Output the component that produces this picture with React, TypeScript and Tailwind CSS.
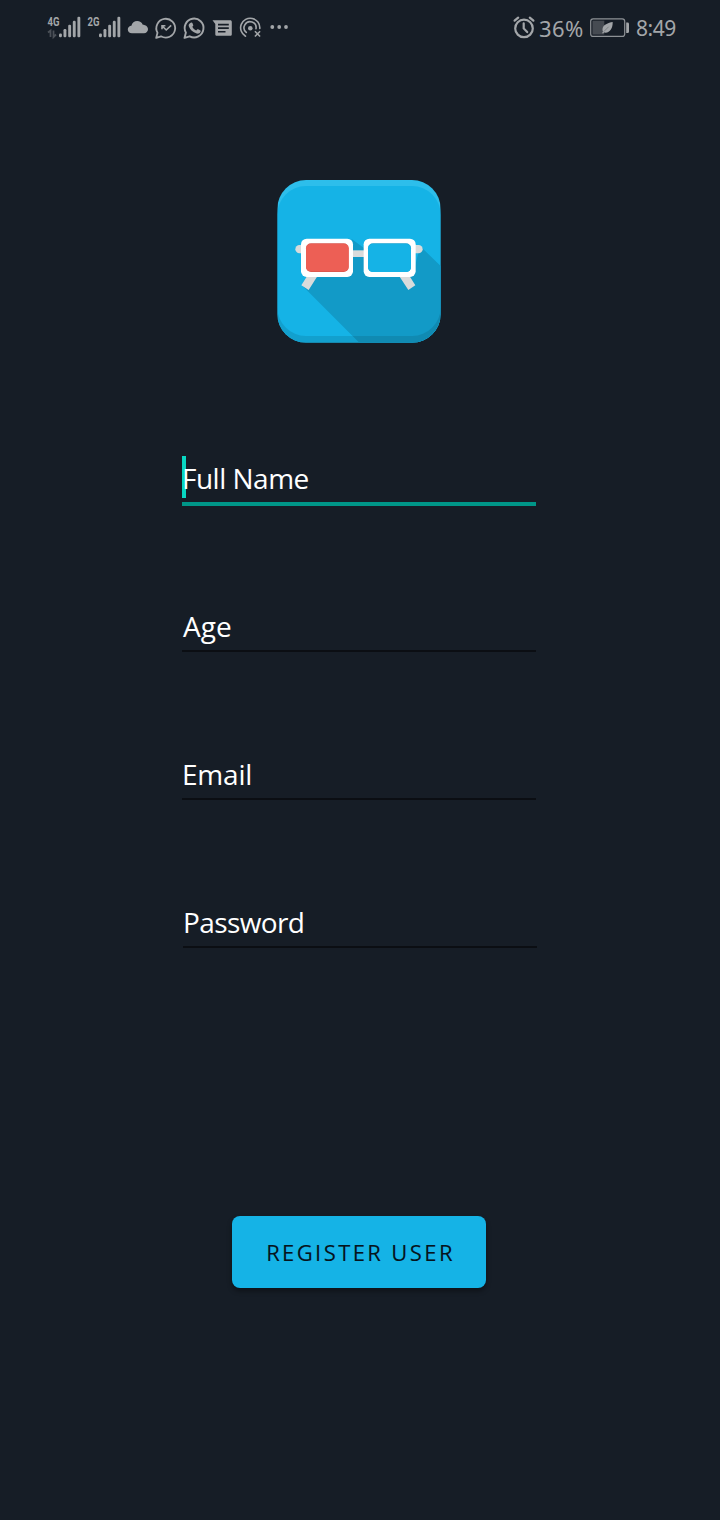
import type { ReactNode } from "react";

function Glyph({ x, width, className, children }: { x: number; width: number; className?: string; children: ReactNode }) {
  return (
    <svg
      width={width}
      height={40}
      viewBox={`${x} 8 ${width} 40`}
      className={`shrink-0 overflow-visible ${className ?? ""}`}
      fill="#a3a6a9"
    >
      {children}
    </svg>
  );
}

function Signal({ label, active }: { label: string; active?: boolean }) {
  return (
    <Glyph x={46} width={40}>
      <text x="47.5" y="26" fontSize="12" fontWeight="700" textLength="12" lengthAdjust="spacingAndGlyphs" fontFamily="Roboto, sans-serif">
        {label}
      </text>
      {active && (
        <path d="M48 32.500l2.500-2v6.500M53.500 30.500v6.500l2.500-2.500" fill="none" stroke="#4b5057" strokeWidth="1.8" />
      )}
      <rect x="59" y="33.5" width="2.9" height="3.7" rx="1.2" />
      <rect x="63.5" y="29" width="2.9" height="8.2" rx="1.2" />
      <rect x="68.2" y="24.8" width="2.9" height="12.4" rx="1.2" />
      <rect x="72.8" y="20.7" width="2.9" height="16.5" rx="1.2" />
      <rect x="77.4" y="16.8" width="2.9" height="20.4" rx="1.2" />
    </Glyph>
  );
}

function StatusBar() {
  return (
    <header className="flex h-14 items-start justify-between pt-2 pr-[43px] pl-[46px] text-[#a3a6a9]">
      <div className="flex">
        <Signal label="4G" active />
        <Signal label="2G" />
        <Glyph x={126} width={26}>
          <path d="M132 33.2c-2.500 0-4.200-1.600-4.200-3.700 0-2.100 1.600-3.500 3.600-3.700.6-2.700 3-4.700 5.800-4.700 2.500 0 4.600 1.400 5.600 3.600 2.900.1 5.200 1.900 5.200 4.500 0 2.300-1.700 4-4 4z" />
        </Glyph>
        <Glyph x={152} width={28}>
          <path d="M156.200 37.900l1.300-5.200a9.400 9.400 0 1 1 3.500 3.600z" fill="none" stroke="#a3a6a9" strokeWidth="1.8" strokeLinejoin="round" />
          <path d="M162 29.300v-3.500h3.400M162.200 26l4 4 5-4.600" fill="none" stroke="#a3a6a9" strokeWidth="1.6" />
        </Glyph>
        <Glyph x={180} width={29}>
          <path d="M184.500 37.900l1.400-5.300a9.400 9.400 0 1 1 3.800 3.700z" fill="none" stroke="#a3a6a9" strokeWidth="1.9" strokeLinejoin="round" />
          <path d="M190.700 22.700c.8-.5 1.400-.3 1.700.4l.8 1.800c.2.600-.1 1.100-.9 1.900.9 1.700 2.100 2.900 3.900 3.700.9-1 1.300-1.500 1.900-1.200l2 1c.7.4.6 1 .3 1.700-.6 1.300-2.200 2-3.700 1.500-4-1.100-6.600-3.600-7.900-7.200-.5-1.400.3-2.900 1.900-3.600z" />
        </Glyph>
        <Glyph x={209} width={28}>
          <path fillRule="evenodd" d="M212.500 20.300h17.700c1 0 1.600.6 1.600 1.600v12.300c0 1-.6 1.600-1.600 1.600h-13.300c-1 0-1.600-.6-1.600-1.600V24zM218 23.700v1.700h10.800v-1.700zM218 27.300v1.700h10.800v-1.700zM218 30.900v1.700h7.500v-1.700z" />
        </Glyph>
        <Glyph x={237} width={28}>
          <g fill="none" stroke="#a3a6a9" strokeWidth="1.6" strokeLinecap="round">
            <path d="M245.500 36.200a9.600 9.600 0 1 1 14.300-7.700" />
            <path d="M246.300 32.400a6 6 0 1 1 9.700-3.700" />
            <path d="M254.900 31.300l5.200 5.200m0-5.200l-5.200 5.200" strokeLinecap="butt" />
          </g>
          <circle cx="250.300" cy="28.200" r="2.300" />
        </Glyph>
        <Glyph x={265} width={26}>
          <circle cx="272.300" cy="27" r="1.900" />
          <circle cx="279.200" cy="27" r="1.900" />
          <circle cx="286" cy="27" r="1.900" />
        </Glyph>
      </div>
      <div className="flex font-['Noto_Sans',sans-serif] text-[21px] leading-[41px]">
        <Glyph x={511} width={27}>
          <g fill="none" stroke="#a3a6a9" strokeWidth="2.200" strokeLinecap="round">
            <circle cx="524" cy="28.400" r="8.800" />
            <path d="M514.600 20.700l3.600-3.100M533.400 20.700l-3.600-3.100" />
            <path d="M523.700 23.300v5.100l3.500 3.700" />
          </g>
        </Glyph>
        <span className="w-[48px] pl-px text-[22px] leading-[40px] tracking-[0.4px]">36%</span>
        <Glyph x={586} width={50}>
          <rect x="590.700" y="18.800" width="34" height="17.600" rx="2.500" fill="none" stroke="#8d9195" strokeWidth="1.200" />
          <rect x="592.500" y="20.700" width="11.800" height="13.800" fill="#464b52" />
          <path d="M626.200 22.500h1.400a1.400 1.400 0 0 1 1.400 1.400v7.800a1.400 1.400 0 0 1-1.400 1.400h-1.400z" />
          <path d="M612.700 22c-4.500.8-9.700 2.600-10.200 6.900-.1 1.100.1 2 .5 2.800l-1 1.300 1 .6 1-1.100c5.600 1.100 8.800-3.900 8.700-10.500z" />
          <path d="M603.700 31.700l5-5" stroke="#6b7076" strokeWidth=".7" />
        </Glyph>
        <span className="w-[41px] tracking-[-0.5px]">8:49</span>
      </div>
    </header>
  );
}

function Logo() {
  return (
    <svg width="180" height="180" viewBox="0 0 540 540" className="ml-[270px] block">
      <defs>
        <clipPath id="tile">
          <rect x="22" y="30" width="490" height="488" rx="86" />
        </clipPath>
      </defs>
      <g clipPath="url(#tile)">
        <rect x="22" y="30" width="490" height="488" fill="#2dbeeb" />
        <path d="M22 134a86 86 0 0 1 86-86h318a86 86 0 0 1 86 86v384H22z" fill="#15b3e6" />
        <path d="M98 348L268 518H512V288L450 228 430 310H290V240L245 207V310L140 322z" fill="#129ac7" />
        <path d="M22 412a86 86 0 0 0 86 86h318a86 86 0 0 0 86-86v110H22z" fill="#000" opacity=".1" />
      </g>
      <g fill="#d9dbdb">
        <rect x="76" y="225" width="40" height="25" rx="12.500" />
        <rect x="418" y="225" width="40" height="25" rx="12.500" />
        <rect x="244" y="241" width="40" height="20" />
        <path d="M111 319h31l-26 41-22-14zM388 319h31l17 27-21 14z" />
      </g>
      <g fill="#fff">
        <rect x="93" y="206" width="156" height="115" rx="17" />
        <rect x="281" y="206" width="156" height="115" rx="17" />
      </g>
      <rect x="108" y="220" width="128" height="86" rx="15" fill="#d9544c" />
      <rect x="108" y="222" width="128" height="82" rx="14" fill="#ed5f55" />
      <rect x="294" y="220" width="129" height="86" rx="15" fill="#11a0d0" />
      <rect x="294" y="222" width="129" height="84" rx="14" fill="#15b3e6" />
    </svg>
  );
}

function Field({ label, focused, className, labelClass }: { label: string; focused?: boolean; className?: string; labelClass: string }) {
  return (
    <div className={`relative h-[148px] w-[354px] ${className ?? ""}`}>
      {focused && <span className="absolute top-0 left-0 h-[42px] w-1 bg-[#08d7c2]" />}
      <div className="h-[46px]">
        <label className={`relative block text-[28px] leading-[44px] whitespace-nowrap text-white ${labelClass}`}>{label}</label>
      </div>
      <div className={focused ? "h-1 bg-[#009688]" : "h-[2px] bg-[#0b0e13]"} />
    </div>
  );
}

export default function App() {
  return (
    <main className="h-[1520px] w-[720px] overflow-hidden bg-[#161d26] font-['Open_Sans',sans-serif]">
      <StatusBar />
      <div className="pt-[114px]">
        <Logo />
      </div>
      <form className="mt-[106px] ml-[182px]">
        <Field label="Full Name" focused labelClass="tracking-[-0.5px]" />
        <Field label="Age" labelClass="ml-px tracking-[0px]" />
        <Field label="Email" labelClass="tracking-[-0.2px]" />
        <Field label="Password" className="ml-px" labelClass="tracking-[-0.6px]" />
        <button
          type="button"
          className="mt-[168px] ml-[50px] flex h-[72px] w-[254px] items-center justify-center rounded-[8px] bg-[#15b3e6] pl-[3px] text-[22px] tracking-[2.4px] whitespace-nowrap text-[#06141d] shadow-[0_3px_5px_rgba(0,0,0,0.4)] [-webkit-text-stroke:0.1px_#06141d]"
        >
          REGISTER USER
        </button>
      </form>
    </main>
  );
}
